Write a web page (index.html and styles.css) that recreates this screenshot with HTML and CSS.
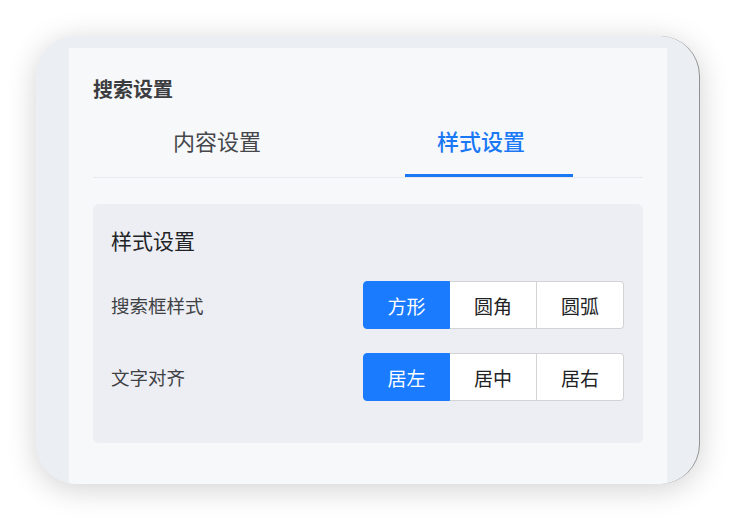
FILE: index.html
```html
<!DOCTYPE html>
<html lang="zh-CN">
<head>
<meta charset="utf-8">
<title>搜索设置</title>
<link rel="stylesheet" href="styles.css">
</head>
<body>
<div class="frame">
  <div class="panel">
    <div class="title">搜索设置</div>
    <div class="tabs">
      <div class="tab">内容设置</div>
      <div class="tab active">样式设置</div>
    </div>
    <div class="card">
      <div class="card-title">样式设置</div>
      <div class="row">
        <div class="label">搜索框样式</div>
        <div class="group">
          <div class="btn on">方形</div>
          <div class="btn">圆角</div>
          <div class="btn">圆弧</div>
        </div>
      </div>
      <div class="row">
        <div class="label">文字对齐</div>
        <div class="group">
          <div class="btn on">居左</div>
          <div class="btn">居中</div>
          <div class="btn">居右</div>
        </div>
      </div>
    </div>
  </div>
</div>
</body>
</html>
```

FILE: styles.css
```css
* { box-sizing: border-box; margin: 0; padding: 0; }
html, body { background: #ffffff; }
body {
  padding: 36px;
  font-family: "Noto Sans CJK SC", "Noto Sans", sans-serif;
  width: 736px;
  height: 520px;
  overflow: hidden;
}
.frame {
  width: 664px;
  height: 448px;
  background: #ebeef3;
  border-radius: 40px;
  border-right: 1px solid #909090;
  box-shadow: 0 5px 30px rgba(0, 0, 0, 0.18);
  padding: 12px 32px 0 33px;
  display: flex;
  flex-direction: column;
  overflow: hidden;
}
.panel {
  flex: 1;
  background: #f7f8fa;
  padding: 26px 24px 0 24px;
}
.title {
  font-size: 20px;
  line-height: 30px;
  font-weight: 700;
  color: #3c3d40;
}
.tabs {
  display: flex;
  gap: 96px;
  padding-left: 48px;
  margin-top: 21px;
  border-bottom: 1px solid #e8eaee;
}
.tab {
  width: 168px;
  padding-left: 32px;
  padding-bottom: 19px;
  border-bottom: 3px solid transparent;
  font-size: 22px;
  line-height: 30px;
  color: #45474b;
}
.tab.active {
  color: #1a78f6;
  font-weight: 500;
  border-bottom-color: #1a78f6;
}
.card {
  margin-top: 26px;
  background: #eceef3;
  border-radius: 6px;
  padding: 21px 19px 42px 18px;
}
.card-title {
  font-size: 21px;
  line-height: 30px;
  color: #222326;
}
.row {
  display: flex;
  align-items: center;
  justify-content: space-between;
  margin-top: 24px;
}
.card-title + .row {
  margin-top: 26px;
}
.label {
  font-size: 18.5px;
  color: #3f4145;
}
.group {
  display: flex;
}
.btn {
  width: 87px;
  height: 48px;
  display: flex;
  align-items: center;
  justify-content: center;
  font-size: 19px;
  color: #222326;
  background: #ffffff;
  border: 1px solid #d2d3d6;
  border-left: 0;
}
.btn:first-child {
  border-left: 1px solid #d2d3d6;
  border-radius: 4px 0 0 4px;
}
.btn:last-child {
  border-radius: 0 4px 4px 0;
}
.btn.on {
  background: #1a7bff;
  border-color: #1a7bff;
  color: #ffffff;
}
```
